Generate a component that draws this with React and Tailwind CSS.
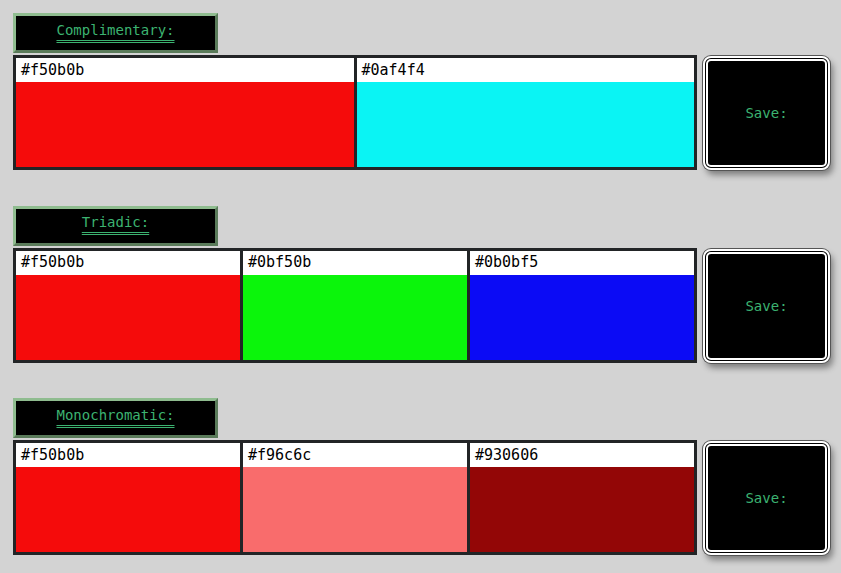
import React from "react";

const sections = [
  { title: "Complimentary:", colors: ["#f50b0b", "#0af4f4"] },
  { title: "Triadic:", colors: ["#f50b0b", "#0bf50b", "#0b0bf5"] },
  { title: "Monochromatic:", colors: ["#f50b0b", "#f96c6c", "#930606"] },
];

function Section({ title, colors }) {
  return (
    <div className="flex flex-col">
      <div className="w-[205px] h-[40px] bg-black border-[3px] border-t-[#8fbc8f] border-l-[#8fbc8f] border-b-[#5a7b5a] border-r-[#5a7b5a] flex items-center justify-center">
        <span className="text-[14px] leading-none text-[#3cb371] underline decoration-double underline-offset-[5px] font-['DejaVu_Sans_Mono',monospace] pb-[7px]">
          {title}
        </span>
      </div>
      <div className="flex flex-row mt-[2px] gap-[6px] items-start">
        <div className="w-[684px] h-[115px] bg-[#222426] p-[3px] flex gap-[3px]">
          {colors.map((c) => (
            <div key={c} className="flex-1 flex flex-col">
              <div className="h-[24px] bg-white flex items-center pl-[5px] text-[15px] text-black font-['DejaVu_Sans_Mono',monospace] leading-none">
                {c}
              </div>
              <div className="flex-1" style={{ backgroundColor: c }} />
            </div>
          ))}
        </div>
        <div className="mt-[1px] w-[127px] h-[114px] bg-black rounded-[8px] border-[5px] border-double border-white shadow-[0_0_0_1px_#555,3px_5px_6px_rgba(0,0,0,0.4)] flex items-center justify-center">
          <span className="text-[14px] text-[#3cb371] font-['DejaVu_Sans_Mono',monospace] leading-none">
            Save:
          </span>
        </div>
      </div>
    </div>
  );
}

export default function App() {
  return (
    <div className="w-[841px] h-[573px] bg-[#d3d3d3] pl-[13px] pt-[13px] flex flex-col gap-[35.5px] overflow-hidden">
      {sections.map((s) => (
        <Section key={s.title} {...s} />
      ))}
    </div>
  );
}
